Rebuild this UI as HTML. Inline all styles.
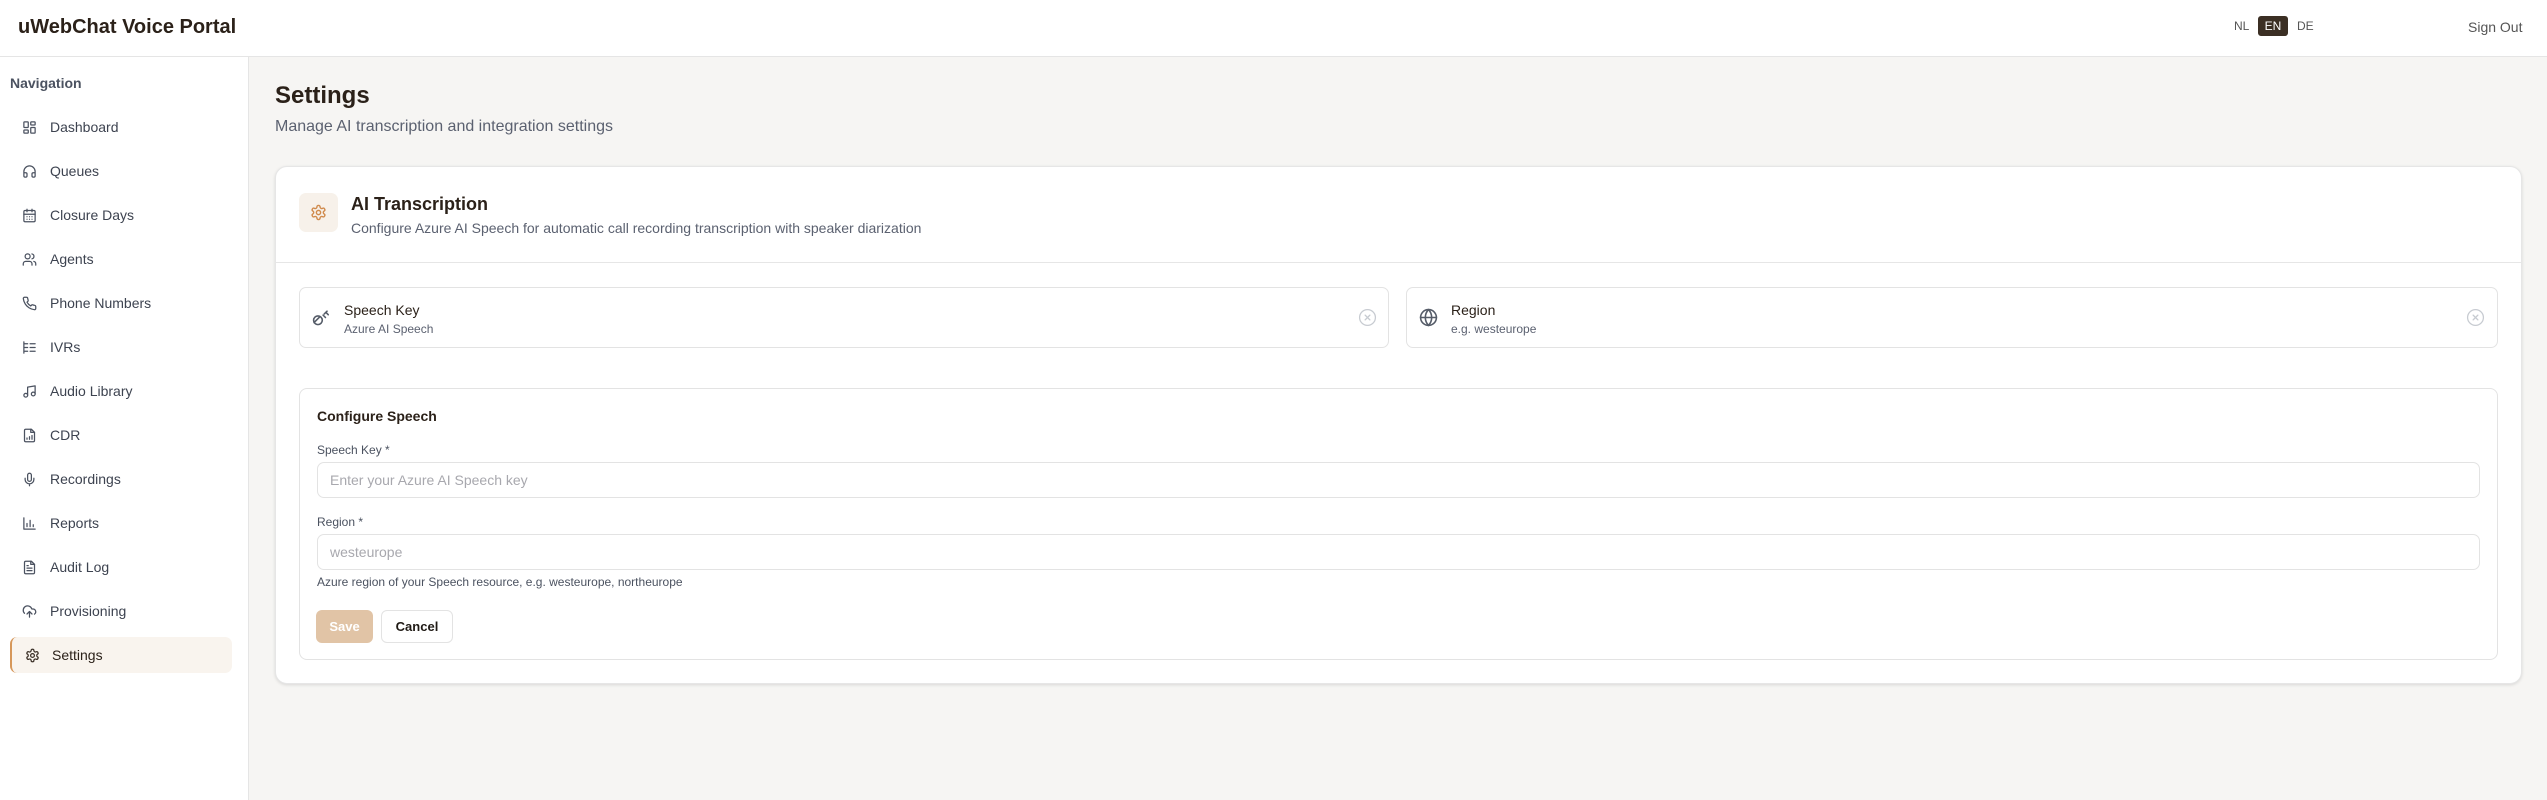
<!DOCTYPE html>
<html><head><meta charset="utf-8"><style>
*{box-sizing:border-box;margin:0;padding:0}
body{width:2547px;height:800px;overflow:hidden;background:#f6f5f3;font-family:"Liberation Sans",sans-serif;position:relative;color:#2b2119}
.abs{position:absolute}
.hdr{left:0;top:0;width:2547px;height:57px;background:#fff;border-bottom:1px solid #e5e5e5}
.side{left:0;top:57px;width:249px;height:743px;background:#fff;border-right:1px solid #e5e5e5}
.nav{position:absolute;left:0;width:249px;height:36px;display:flex;align-items:center;font-size:14px;color:#3d4350}
.nav svg{position:absolute;left:22px;width:15px;height:15px;fill:none;stroke:#4b5260;stroke-width:2;stroke-linecap:round;stroke-linejoin:round}
.nav span{position:absolute;left:50px}
.ico svg{fill:none;stroke-linecap:round;stroke-linejoin:round}
.inp{position:absolute;left:317px;width:2163px;height:36px;border:1px solid #e3e3e3;border-radius:7px;background:#fff;font-size:14px;color:#a8a8ae;padding-left:12px;line-height:34px}
</style></head><body>
<div class="abs hdr"></div>
<div class="abs" style="left:18px;top:16px;font-size:20px;font-weight:bold;color:#2b2119">uWebChat Voice Portal</div>
<div class="abs" style="left:2234px;top:19px;font-size:12px;color:#555">NL</div>
<div class="abs" style="left:2258px;top:16px;width:30px;height:20px;border-radius:3px;background:#3b2f24;color:#fff;font-size:12px;text-align:center;line-height:20px">EN</div>
<div class="abs" style="left:2297px;top:19px;font-size:12px;color:#555">DE</div>
<div class="abs" style="left:2468px;top:19px;font-size:14px;color:#555">Sign Out</div>

<div class="abs side"></div>
<div class="abs" style="left:10px;top:75px;font-size:14px;font-weight:bold;color:#4b5260">Navigation</div>
<div class="nav" style="top:109px"><svg viewBox="0 0 24 24"><rect x="3" y="3" width="7" height="9" rx="1"/><rect x="14" y="3" width="7" height="5" rx="1"/><rect x="14" y="12" width="7" height="9" rx="1"/><rect x="3" y="16" width="7" height="5" rx="1"/></svg><span>Dashboard</span></div>
<div class="nav" style="top:153px"><svg viewBox="0 0 24 24"><path d="M3 14h3a2 2 0 0 1 2 2v3a2 2 0 0 1-2 2H5a2 2 0 0 1-2-2v-7a9 9 0 0 1 18 0v7a2 2 0 0 1-2 2h-1a2 2 0 0 1-2-2v-3a2 2 0 0 1 2-2h3"/></svg><span>Queues</span></div>
<div class="nav" style="top:197px"><svg viewBox="0 0 24 24"><rect x="3" y="4" width="18" height="18" rx="2"/><path d="M16 2v4M8 2v4M3 10h18M8 14h.01M12 14h.01M16 14h.01M8 18h.01M12 18h.01M16 18h.01"/></svg><span>Closure Days</span></div>
<div class="nav" style="top:241px"><svg viewBox="0 0 24 24"><path d="M16 21v-2a4 4 0 0 0-4-4H6a4 4 0 0 0-4 4v2"/><circle cx="9" cy="7" r="4"/><path d="M22 21v-2a4 4 0 0 0-3-3.9M16 3.1a4 4 0 0 1 0 7.8"/></svg><span>Agents</span></div>
<div class="nav" style="top:285px"><svg viewBox="0 0 24 24"><path d="M22 16.9v3a2 2 0 0 1-2.2 2 19.8 19.8 0 0 1-8.6-3.1 19.5 19.5 0 0 1-6-6A19.8 19.8 0 0 1 2.1 4.2 2 2 0 0 1 4.1 2h3a2 2 0 0 1 2 1.7c.1 1 .4 1.9.7 2.8a2 2 0 0 1-.5 2.1L8 9.9a16 16 0 0 0 6 6l1.3-1.300a2 2 0 0 1 2.1-.4c.9.3 1.8.6 2.8.7a2 2 0 0 1 1.7 2z"/></svg><span>Phone Numbers</span></div>
<div class="nav" style="top:329px"><svg viewBox="0 0 24 24"><path d="M3 3v18M3 6h6M3 12h6M3 18h6M13 6h8M13 12h8M13 18h8"/></svg><span>IVRs</span></div>
<div class="nav" style="top:373px"><svg viewBox="0 0 24 24"><path d="M9 18V5l12-2v13"/><circle cx="6" cy="18" r="3"/><circle cx="18" cy="16" r="3"/></svg><span>Audio Library</span></div>
<div class="nav" style="top:417px"><svg viewBox="0 0 24 24"><path d="M15 2H6a2 2 0 0 0-2 2v16a2 2 0 0 0 2 2h12a2 2 0 0 0 2-2V7z"/><path d="M14 2v5h6M8 18v-2M12 18v-4M16 18v-6"/></svg><span>CDR</span></div>
<div class="nav" style="top:461px"><svg viewBox="0 0 24 24"><rect x="9" y="2" width="6" height="13" rx="3"/><path d="M19 10v2a7 7 0 0 1-14 0v-2M12 19v3"/></svg><span>Recordings</span></div>
<div class="nav" style="top:505px"><svg viewBox="0 0 24 24"><path d="M3 3v18h18M8 17v-5M13 17V7M18 17v-3"/></svg><span>Reports</span></div>
<div class="nav" style="top:549px"><svg viewBox="0 0 24 24"><path d="M15 2H6a2 2 0 0 0-2 2v16a2 2 0 0 0 2 2h12a2 2 0 0 0 2-2V7z"/><path d="M14 2v5h6M8 13h8M8 17h8M8 9h2"/></svg><span>Audit Log</span></div>
<div class="nav" style="top:593px"><svg viewBox="0 0 24 24"><path d="M4 14.9A7 7 0 1 1 15.7 8h1.8a4.5 4.5 0 0 1 2.5 8.2M12 12v9M8 16l4-4 4 4"/></svg><span>Provisioning</span></div>
<div class="abs" style="left:10px;top:637px;width:222px;height:36px;background:#f9f4ee;border-left:2px solid #d6975a;border-radius:7px"></div>
<div class="nav" style="top:637px"><svg viewBox="0 0 24 24" style="left:25px;stroke:#3b3027"><path d="M12.2 2h-.4a2 2 0 0 0-2 2v.2a2 2 0 0 1-1 1.7l-.4.3a2 2 0 0 1-2 0l-.2-.1a2 2 0 0 0-2.7.7l-.2.4a2 2 0 0 0 .7 2.7l.2.1a2 2 0 0 1 1 1.7v.5a2 2 0 0 1-1 1.8l-.2.1a2 2 0 0 0-.7 2.7l.2.4a2 2 0 0 0 2.7.7l.2-.1a2 2 0 0 1 2 0l.4.3a2 2 0 0 1 1 1.7v.2a2 2 0 0 0 2 2h.4a2 2 0 0 0 2-2v-.2a2 2 0 0 1 1-1.7l.4-.3a2 2 0 0 1 2 0l.2.1a2 2 0 0 0 2.7-.7l.2-.4a2 2 0 0 0-.7-2.7l-.2-.1a2 2 0 0 1-1-1.8v-.5a2 2 0 0 1 1-1.7l.2-.1a2 2 0 0 0 .7-2.7l-.2-.4a2 2 0 0 0-2.7-.7l-.2.1a2 2 0 0 1-2 0l-.4-.3a2 2 0 0 1-1-1.7V4a2 2 0 0 0-2-2z"/><circle cx="12" cy="12" r="3"/></svg><span style="left:52px;color:#2b2119">Settings</span></div>

<div class="abs" style="left:275px;top:82px;font-size:24px;font-weight:bold;color:#2b2119">Settings</div>
<div class="abs" style="left:275px;top:118px;font-size:16px;color:#5b6170">Manage AI transcription and integration settings</div>

<div class="abs" style="left:275px;top:166px;width:2247px;height:518px;background:#fff;border:1px solid #e6e6e6;border-radius:12px;box-shadow:0 1px 3px rgba(0,0,0,.12)"></div>
<div class="abs ico" style="left:299px;top:193px;width:39px;height:39px;background:#f7f1ea;border-radius:7px;display:flex;align-items:center;justify-content:center"><svg width="17" height="17" viewBox="0 0 24 24" stroke="#d08a4c" stroke-width="2"><path d="M12.2 2h-.4a2 2 0 0 0-2 2v.2a2 2 0 0 1-1 1.7l-.4.3a2 2 0 0 1-2 0l-.2-.1a2 2 0 0 0-2.7.7l-.2.4a2 2 0 0 0 .7 2.7l.2.1a2 2 0 0 1 1 1.7v.5a2 2 0 0 1-1 1.8l-.2.1a2 2 0 0 0-.7 2.7l.2.4a2 2 0 0 0 2.7.7l.2-.1a2 2 0 0 1 2 0l.4.3a2 2 0 0 1 1 1.7v.2a2 2 0 0 0 2 2h.4a2 2 0 0 0 2-2v-.2a2 2 0 0 1 1-1.7l.4-.3a2 2 0 0 1 2 0l.2.1a2 2 0 0 0 2.7-.7l.2-.4a2 2 0 0 0-.7-2.7l-.2-.1a2 2 0 0 1-1-1.8v-.5a2 2 0 0 1 1-1.7l.2-.1a2 2 0 0 0 .7-2.7l-.2-.4a2 2 0 0 0-2.7-.7l-.2.1a2 2 0 0 1-2 0l-.4-.3a2 2 0 0 1-1-1.7V4a2 2 0 0 0-2-2z"/><circle cx="12" cy="12" r="3"/></svg></div>
<div class="abs" style="left:351px;top:194px;font-size:18px;font-weight:bold;color:#2b2119">AI Transcription</div>
<div class="abs" style="left:351px;top:220px;font-size:14px;color:#5b6170">Configure Azure AI Speech for automatic call recording transcription with speaker diarization</div>
<div class="abs" style="left:276px;top:262px;width:2245px;height:1px;background:#e6e6e6"></div>

<div class="abs" style="left:299px;top:287px;width:1090px;height:61px;border:1px solid #e3e3e3;border-radius:7px"></div>
<div class="abs ico" style="left:312px;top:308px"><svg width="19" height="19" viewBox="0 0 24 24" stroke="#555c68" stroke-width="2"><path d="M2.6 18.4 10 11M15.5 7.5 19 4M14 9l3 3M17.5 5.5l3 3"/><circle cx="7.5" cy="15.5" r="5.5"/></svg></div>
<div class="abs" style="left:344px;top:302px;font-size:14px;color:#2b2119">Speech Key</div>
<div class="abs" style="left:344px;top:322px;font-size:12px;color:#5b6170">Azure AI Speech</div>
<div class="abs ico" style="left:1358px;top:308px"><svg width="19" height="19" viewBox="0 0 24 24" stroke="#c7cbd1" stroke-width="1.6"><circle cx="12" cy="12" r="10"/><path d="m15 9-6 6M9 9l6 6"/></svg></div>

<div class="abs" style="left:1406px;top:287px;width:1092px;height:61px;border:1px solid #e3e3e3;border-radius:7px"></div>
<div class="abs ico" style="left:1419px;top:308px"><svg width="19" height="19" viewBox="0 0 24 24" stroke="#555c68" stroke-width="2"><circle cx="12" cy="12" r="10"/><path d="M12 2a14.5 14.5 0 0 0 0 20 14.5 14.5 0 0 0 0-20M2 12h20"/></svg></div>
<div class="abs" style="left:1451px;top:302px;font-size:14px;color:#2b2119">Region</div>
<div class="abs" style="left:1451px;top:322px;font-size:12px;color:#5b6170">e.g. westeurope</div>
<div class="abs ico" style="left:2466px;top:308px"><svg width="19" height="19" viewBox="0 0 24 24" stroke="#c7cbd1" stroke-width="1.6"><circle cx="12" cy="12" r="10"/><path d="m15 9-6 6M9 9l6 6"/></svg></div>

<div class="abs" style="left:299px;top:388px;width:2199px;height:272px;border:1px solid #e3e3e3;border-radius:8px"></div>
<div class="abs" style="left:317px;top:408px;font-size:14px;font-weight:bold;color:#2b2119">Configure Speech</div>
<div class="abs" style="left:317px;top:443px;font-size:12px;color:#4b5260">Speech Key *</div>
<div class="inp" style="top:462px">Enter your Azure AI Speech key</div>
<div class="abs" style="left:317px;top:515px;font-size:12px;color:#4b5260">Region *</div>
<div class="inp" style="top:534px">westeurope</div>
<div class="abs" style="left:317px;top:575px;font-size:12px;color:#4b5260">Azure region of your Speech resource, e.g. westeurope, northeurope</div>
<div class="abs" style="left:316px;top:610px;width:57px;height:33px;background:#e1c4a6;border-radius:6px;color:#fff;font-size:13px;font-weight:bold;text-align:center;line-height:33px">Save</div>
<div class="abs" style="left:381px;top:610px;width:72px;height:33px;background:#fff;border:1px solid #e3e3e3;border-radius:6px;color:#1f1a15;font-size:13px;font-weight:bold;text-align:center;line-height:31px">Cancel</div>
</body></html>
